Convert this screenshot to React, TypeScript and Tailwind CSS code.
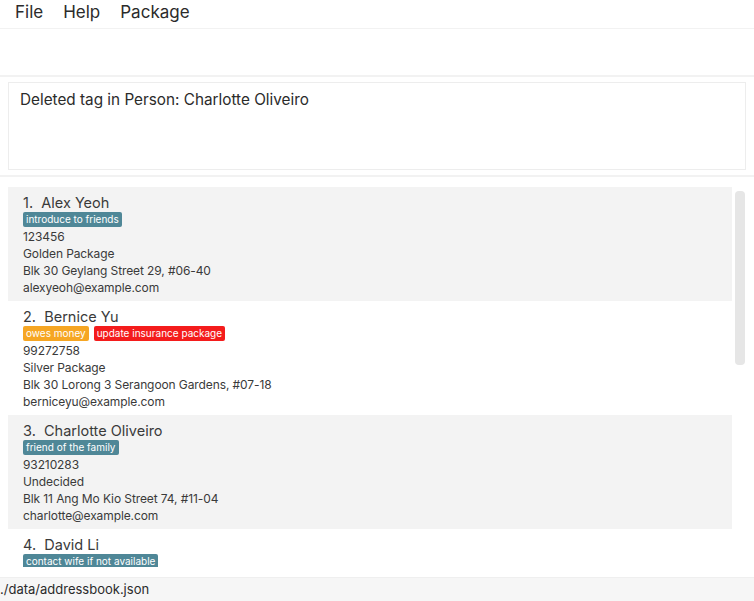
import React from 'react';

type Tag = { label: string; color: string };

interface Person {
  name: string;
  tags: Tag[];
  phone: string;
  pkg: string;
  address: string;
  email: string;
}

const TEAL = 'bg-[#4f8797]';

const people: Person[] = [
  {
    name: 'Alex Yeoh',
    tags: [{ label: 'introduce to friends', color: TEAL }],
    phone: '123456',
    pkg: 'Golden Package',
    address: 'Blk 30 Geylang Street 29, #06-40',
    email: 'alexyeoh@example.com',
  },
  {
    name: 'Bernice Yu',
    tags: [
      { label: 'owes money', color: 'bg-[#f6a623]' },
      { label: 'update insurance package', color: 'bg-[#f41c1c]' },
    ],
    phone: '99272758',
    pkg: 'Silver Package',
    address: 'Blk 30 Lorong 3 Serangoon Gardens, #07-18',
    email: 'berniceyu@example.com',
  },
  {
    name: 'Charlotte Oliveiro',
    tags: [{ label: 'friend of the family', color: TEAL }],
    phone: '93210283',
    pkg: 'Undecided',
    address: 'Blk 11 Ang Mo Kio Street 74, #11-04',
    email: 'charlotte@example.com',
  },
  {
    name: 'David Li',
    tags: [{ label: 'contact wife if not available', color: TEAL }],
    phone: '91031282',
    pkg: 'Golden Package',
    address: 'Blk 436 Serangoon Gardens Street 26, #16-43',
    email: 'lidavid@example.com',
  },
];

function PersonCard({ person, index }: { person: Person; index: number }) {
  const shaded = index % 2 === 0;
  return (
    <div className={`h-[114px] shrink-0 pl-[15px] pt-[6px] ${shaded ? 'bg-[#f3f3f3]' : 'bg-white'}`}>
      <div className="h-[19px] text-[14.5px] leading-[19px] text-[#3a3a3a]">
        {index + 1}.&nbsp; {person.name}
      </div>
      <div className="flex gap-[5px] h-[16px]">
        {person.tags.map((t) => (
          <span
            key={t.label}
            className={`${t.color} h-[15px] px-[3px] rounded-[2px] text-[10px] leading-[15px] text-white`}
          >
            {t.label}
          </span>
        ))}
      </div>
      <div className="text-[12px] tracking-[-0.1px] leading-[17px] text-[#3a3a3a]">
        <div>{person.phone}</div>
        <div>{person.pkg}</div>
        <div>{person.address}</div>
        <div>{person.email}</div>
      </div>
    </div>
  );
}

export default function App() {
  return (
    <div
      className="w-[754px] h-[601px] flex flex-col bg-white overflow-hidden"
      style={{ fontFamily: 'Inter, "Open Sans", sans-serif' }}
    >
      {/* menu bar */}
      <div className="h-[29px] shrink-0 flex items-center gap-[20px] pl-[15px] pb-[2px] border-b border-[#f2f2f2] text-[17px] text-[#2b2b2b]">
        <span>File</span>
        <span>Help</span>
        <span>Package</span>
      </div>

      {/* command box */}
      <div className="h-[48px] shrink-0 border-b-2 border-[#f2f2f2]" />

      {/* result display */}
      <div className="shrink-0 px-[8px] pt-[5px] pb-[5px] border-b-2 border-[#f2f2f2]">
        <div className="h-[88px] border border-[#ededed] pl-[11px] pt-[6px] text-[15.3px] text-[#2b2b2b]">
          Deleted tag in Person: Charlotte Oliveiro
        </div>
      </div>

      {/* person list */}
      <div className="flex-1 min-h-0 flex pt-[10px] pb-[10px]">
        <div className="w-[724px] ml-[8px] flex flex-col overflow-hidden">
          {people.map((p, i) => (
            <PersonCard key={p.name} person={p} index={i} />
          ))}
        </div>
        <div className="ml-[3px] mt-[4px] w-[10px] h-[174px] rounded-[4px] bg-[#e6e6e6]" />
      </div>

      {/* status bar */}
      <div className="h-[24px] shrink-0 bg-[#f6f6f6] border-t border-[#efefef] flex items-center text-[13px] text-[#2b2b2b]">
        ./data/addressbook.json
      </div>
    </div>
  );
}
